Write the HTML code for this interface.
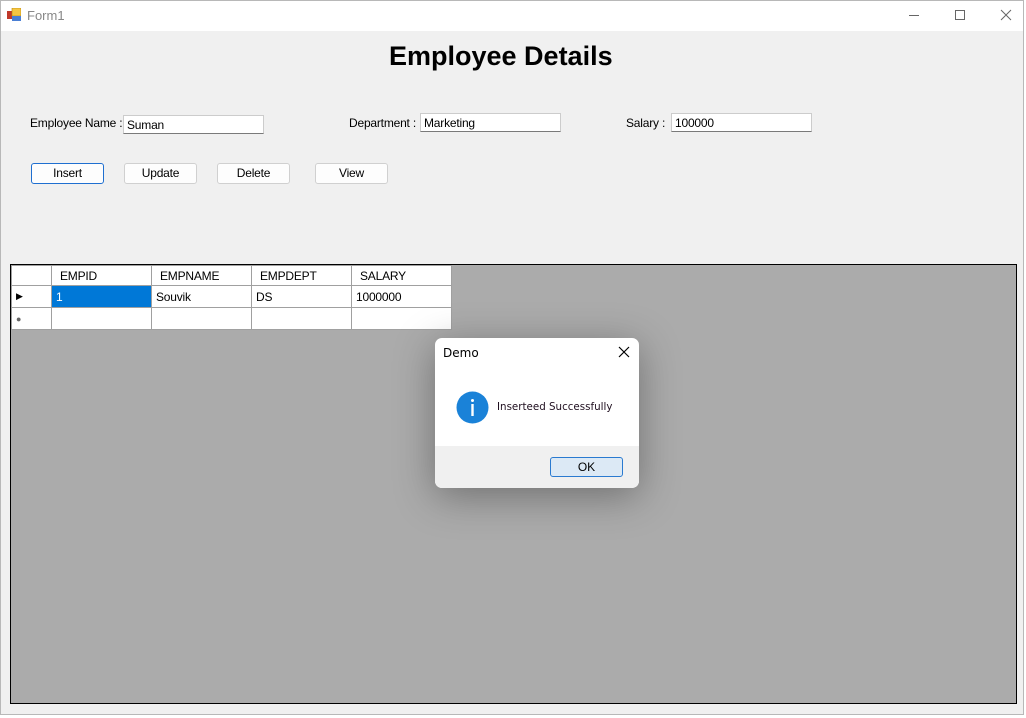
<!DOCTYPE html>
<html><head><style>
body{margin:0;width:1026px;height:718px;overflow:hidden;background:#fff;font-family:"Liberation Sans",sans-serif;position:relative}
.win{position:absolute;left:0;top:0;width:1024px;height:715px;background:#f0f0f0}
.frame{position:absolute;left:0;top:0;width:1024px;height:715px;border:1px solid #b8b8b8;box-sizing:border-box}
.title{position:absolute;left:0;top:0;width:100%;height:31px;background:#fff}
.a{position:absolute;white-space:nowrap}
.lbl{font-size:12px;color:#000;letter-spacing:-0.2px}
.tb{position:absolute;height:19px;background:#fff;border:1px solid #ccc;border-bottom:1px solid #7a7a7a;box-sizing:border-box;font-size:12px;padding:2px 0 0 3px;letter-spacing:-0.2px}
.btn{position:absolute;top:163px;width:73px;height:21px;background:#fdfdfd;border:1px solid #d0d0d0;border-radius:3px;box-sizing:border-box;font-size:12px;text-align:center;line-height:19px;letter-spacing:-0.2px}
.grid{position:absolute;left:10px;top:264px;width:1007px;height:440px;background:#ababab;border:1px solid #000;box-sizing:border-box}
table{border-collapse:collapse;position:absolute;left:0;top:0;font-size:12px;letter-spacing:-0.2px}
td{border:1px solid #a0a0a0;height:20px;padding:0 0 0 4px;background:#fff;box-sizing:border-box}
</style></head><body>
<div class="win">
<div class="title">
 <svg class="a" style="left:7px;top:8px" width="14" height="14"><rect x="0" y="3" width="6" height="8" fill="#c0392b"/><rect x="5" y="0" width="9" height="8" fill="#f5c542" stroke="#b8860b" stroke-width=".6"/><rect x="5" y="8" width="9" height="5" fill="#4a7fd4"/></svg>
 <div class="a" style="left:27px;top:8px;font-size:13px;color:#888">Form1</div>
 <svg class="a" style="left:905px;top:8px" width="110" height="16" fill="none" stroke="#666" stroke-width="1"><line x1="4" y1="7.5" x2="14" y2="7.5"/><rect x="50.5" y="2.5" width="9" height="9"/><path d="M96 2 L106 12 M106 2 L96 12"/></svg>
</div>
<div class="a" style="left:389px;top:41px;font-size:27px;font-weight:bold">Employee Details</div>
<div class="a lbl" style="left:30px;top:116px">Employee Name :</div>
<div class="tb" style="left:123px;top:115px;width:141px">Suman</div>
<div class="a lbl" style="left:349px;top:116px">Department :</div>
<div class="tb" style="left:420px;top:113px;width:141px">Marketing</div>
<div class="a lbl" style="left:626px;top:116px">Salary :</div>
<div class="tb" style="left:671px;top:113px;width:141px">100000</div>
<div class="btn" style="left:31px;border:1px solid #1f6fd0">Insert</div>
<div class="btn" style="left:124px">Update</div>
<div class="btn" style="left:217px">Delete</div>
<div class="btn" style="left:315px">View</div>
<div class="grid">
<table>
<tr><td style="width:40px"></td><td style="width:100px;padding-left:8px">EMPID</td><td style="width:100px;padding-left:8px">EMPNAME</td><td style="width:100px;padding-left:8px">EMPDEPT</td><td style="width:100px;padding-left:8px">SALARY</td></tr>
<tr style="height:22px"><td style="font-size:9px">&#9654;</td><td style="background:#0078d7;color:#fff">1</td><td>Souvik</td><td>DS</td><td>1000000</td></tr>
<tr style="height:22px"><td style="font-size:9px;color:#666">&#9679;</td><td></td><td></td><td></td><td></td></tr>
</table>
</div>
<div class="a" style="left:435px;top:338px;width:204px;height:150px;background:#fff;border-radius:7px;box-shadow:0 8px 40px rgba(0,0,0,.35);overflow:hidden">
 <div class="a" style="left:8px;top:8px;font-size:12px;font-family:'DejaVu Sans',sans-serif">Demo</div>
 <svg class="a" style="left:183px;top:8px" width="12" height="12" stroke="#000" stroke-width="1.2"><path d="M1 1 L11 11 M11 1 L1 11"/></svg>
 <svg class="a" style="left:21px;top:53px" width="33" height="33"><circle cx="16.5" cy="16.5" r="16" fill="#1a82d8"/><rect x="15.3" y="13" width="2.4" height="12" fill="#fff"/><circle cx="16.5" cy="9.5" r="1.5" fill="#fff"/></svg>
 <div class="a" style="left:62px;top:63px;font-size:10.3px;font-family:'DejaVu Sans',sans-serif;color:#201020">Inserteed Successfully</div>
 <div class="a" style="left:0;top:108px;width:204px;height:42px;background:#f0f0f0"></div>
 <div class="a" style="left:115px;top:119px;width:73px;height:20px;background:#dce9f5;border:1px solid #2a7ad0;border-radius:3px;box-sizing:border-box;font-size:12px;text-align:center;line-height:18px">OK</div>
</div>
</div>
<div class="frame"></div>
</body></html>
